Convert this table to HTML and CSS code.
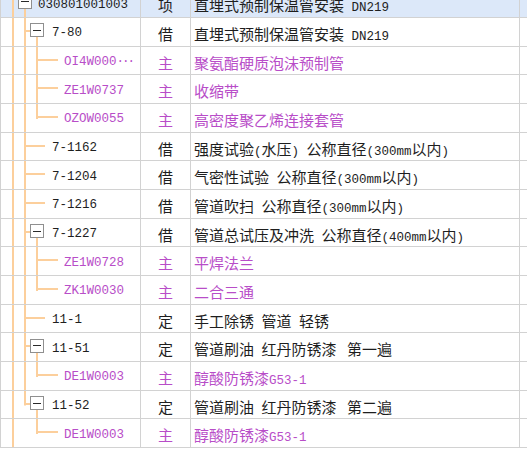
FILE: index.html
```html
<!DOCTYPE html>
<html lang="zh-CN">
<head>
<meta charset="utf-8">
<title>Tree grid</title>
<link rel="stylesheet" href="styles.css">
</head>
<body>
<div class="grid">
  <div class="row sel">
    <div class="c1 l0 vA vBd"><span class="box"></span><span class="code">030801001003</span></div>
    <div class="c2">项</div>
    <div class="c3"><span class="t">直埋式预制保温管安装<span class="a"> DN219</span></span></div>
    <div class="c4"></div>
  </div>
  <div class="row">
    <div class="c1 l1b vA vB hBb vCd"><span class="box"></span><span class="code">7-80</span></div>
    <div class="c2">借</div>
    <div class="c3"><span class="t">直埋式预制保温管安装<span class="a"> DN219</span></span></div>
    <div class="c4"></div>
  </div>
  <div class="row m">
    <div class="c1 l2 vA vB vC hC"><span class="code">OI4W000<span class="dots">···</span></span></div>
    <div class="c2">主</div>
    <div class="c3"><span class="t">聚氨酯硬质泡沫预制管</span></div>
    <div class="c4"></div>
  </div>
  <div class="row m">
    <div class="c1 l2 vA vB vC hC"><span class="code">ZE1W0737</span></div>
    <div class="c2">主</div>
    <div class="c3"><span class="t">收缩带</span></div>
    <div class="c4"></div>
  </div>
  <div class="row m">
    <div class="c1 l2 vA vB vCu hC"><span class="code">OZOW0055</span></div>
    <div class="c2">主</div>
    <div class="c3"><span class="t">高密度聚乙烯连接套管</span></div>
    <div class="c4"></div>
  </div>
  <div class="row">
    <div class="c1 l1 vA vB hB"><span class="code">7-1162</span></div>
    <div class="c2">借</div>
    <div class="c3"><span class="t">强度试验<span class="a">(</span>水压<span class="a">) </span>公称直径<span class="a">(300mm</span>以内<span class="a">)</span></span></div>
    <div class="c4"></div>
  </div>
  <div class="row">
    <div class="c1 l1 vA vB hB"><span class="code">7-1204</span></div>
    <div class="c2">借</div>
    <div class="c3"><span class="t">气密性试验<span class="a"> </span>公称直径<span class="a">(300mm</span>以内<span class="a">)</span></span></div>
    <div class="c4"></div>
  </div>
  <div class="row">
    <div class="c1 l1 vA vB hB"><span class="code">7-1216</span></div>
    <div class="c2">借</div>
    <div class="c3"><span class="t">管道吹扫<span class="a"> </span>公称直径<span class="a">(300mm</span>以内<span class="a">)</span></span></div>
    <div class="c4"></div>
  </div>
  <div class="row">
    <div class="c1 l1b vA vB hBb vCd"><span class="box"></span><span class="code">7-1227</span></div>
    <div class="c2">借</div>
    <div class="c3"><span class="t">管道总试压及冲洗<span class="a"> </span>公称直径<span class="a">(400mm</span>以内<span class="a">)</span></span></div>
    <div class="c4"></div>
  </div>
  <div class="row m">
    <div class="c1 l2 vA vB vC hC"><span class="code">ZE1W0728</span></div>
    <div class="c2">主</div>
    <div class="c3"><span class="t">平焊法兰</span></div>
    <div class="c4"></div>
  </div>
  <div class="row m">
    <div class="c1 l2 vA vB vCu hC"><span class="code">ZK1W0030</span></div>
    <div class="c2">主</div>
    <div class="c3"><span class="t">二合三通</span></div>
    <div class="c4"></div>
  </div>
  <div class="row">
    <div class="c1 l1 vA vB hB"><span class="code">11-1</span></div>
    <div class="c2">定</div>
    <div class="c3"><span class="t">手工除锈<span class="a"> </span>管道<span class="a"> </span>轻锈</span></div>
    <div class="c4"></div>
  </div>
  <div class="row">
    <div class="c1 l1b vA vB hBb vCd"><span class="box"></span><span class="code">11-51</span></div>
    <div class="c2">定</div>
    <div class="c3"><span class="t">管道刷油<span class="a"> </span>红丹防锈漆<span class="a wide"> </span>第一遍</span></div>
    <div class="c4"></div>
  </div>
  <div class="row m">
    <div class="c1 l2 vA vB vCu hC"><span class="code">DE1W0003</span></div>
    <div class="c2">主</div>
    <div class="c3"><span class="t">醇酸防锈漆<span class="a">G53-1</span></span></div>
    <div class="c4"></div>
  </div>
  <div class="row">
    <div class="c1 l1b vA vBu hBb vCd"><span class="box"></span><span class="code">11-52</span></div>
    <div class="c2">定</div>
    <div class="c3"><span class="t">管道刷油<span class="a"> </span>红丹防锈漆<span class="a wide"> </span>第二遍</span></div>
    <div class="c4"></div>
  </div>
  <div class="row m">
    <div class="c1 l2 vA vCu hC"><span class="code">DE1W0003</span></div>
    <div class="c2">主</div>
    <div class="c3"><span class="t">醇酸防锈漆<span class="a">G53-1</span></span></div>
    <div class="c4"></div>
  </div>
</div>
</body>
</html>
```
FILE: styles.css
```css
* { box-sizing: border-box; }
html, body { margin: 0; background: #fff; }
body {
  width: 527px;
  height: 451px;
  overflow: hidden;
  font-family: "Noto Sans CJK SC", sans-serif;
  font-size: 15px;
  color: #1e1e1e;
  --lc: #fccf9c;
  --gl: #d2d2d2;
}
.grid {
  margin-top: -10.5px;
  border-left: 1px solid var(--gl);
}
.row {
  display: flex;
  height: 28.667px;
  border-bottom: 1px solid var(--gl);
}
.row.sel { background: #dce8f9; }
.row.m { color: #b84dc8; }

.c1 {
  width: 140px;
  flex: none;
  display: flex;
  align-items: center;
  border-right: 1px solid var(--gl);
  white-space: nowrap;
  overflow: hidden;
  background: var(--a, none), var(--b, none), var(--c, none), var(--h, none);
}
.c2 {
  width: 50px;
  flex: none;
  display: flex;
  align-items: center;
  justify-content: center;
  padding-top: 3px;
  border-right: 1px solid var(--gl);
}
.c3 {
  width: 329px;
  flex: none;
  display: flex;
  align-items: center;
  padding-left: 3px;
  padding-top: 3px;
  border-right: 1px solid var(--gl);
  white-space: pre;
}
.c4 { flex: 1; }

.l0 { padding-left: 17px; }
.l0 .box { margin-right: 6px; }
.l1b { padding-left: 29px; }
.l1b .box { margin-right: 8px; }
.l1 { padding-left: 51px; }
.l2 { padding-left: 63px; }

.box {
  flex: none;
  width: 14px;
  height: 14px;
  margin-bottom: 3px;
  border: 1px solid #8f8f8f;
  background: #fff;
  display: flex;
  align-items: center;
  justify-content: center;
}
.box::before {
  content: "";
  width: 8px;
  height: 1px;
  background: #2a2a2a;
}

.code {
  font-family: "Liberation Mono", monospace;
  font-size: 12.5px;
  padding-top: 3px;
}
.dots { letter-spacing: -2px; }
.a {
  font-family: "Liberation Mono", monospace;
  font-size: 12.5px;
}
.a.wide { padding-right: 3px; }

/* tree guide lines */
.vA  { --a: linear-gradient(var(--lc), var(--lc)) 11px 0 / 2px 100% no-repeat; }
.vB  { --b: linear-gradient(var(--lc), var(--lc)) 23px 0 / 2px 100% no-repeat; }
.vBu { --b: linear-gradient(var(--lc), var(--lc)) 23px 0 / 2px calc(50% + 1px) no-repeat; }
.vBd { --b: linear-gradient(var(--lc), var(--lc)) 23px 100% / 2px 50% no-repeat; }
.vC  { --c: linear-gradient(var(--lc), var(--lc)) 35px 0 / 2px 100% no-repeat; }
.vCu { --c: linear-gradient(var(--lc), var(--lc)) 35px 0 / 2px calc(50% + 1px) no-repeat; }
.vCd { --c: linear-gradient(var(--lc), var(--lc)) 35px 100% / 2px 50% no-repeat; }
.hB  { --h: linear-gradient(var(--lc), var(--lc)) 23px calc(50% - 1px) / 21px 2px no-repeat; }
.hBb { --h: linear-gradient(var(--lc), var(--lc)) 23px calc(50% - 1px) / 8px 2px no-repeat; }
.hC  { --h: linear-gradient(var(--lc), var(--lc)) 35px calc(50% - 1px) / 22px 2px no-repeat; }
```
